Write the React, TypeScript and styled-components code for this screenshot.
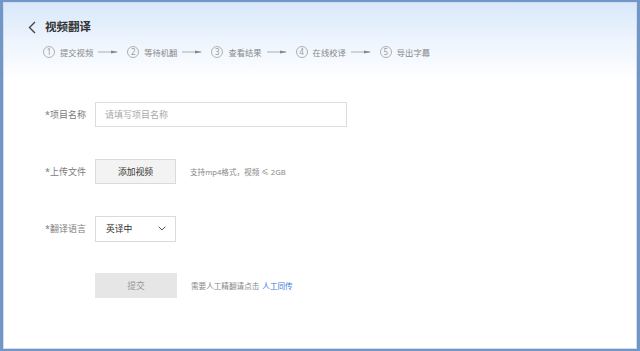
import React from "react";
import styled, { createGlobalStyle } from "styled-components";

const Global = createGlobalStyle`
  html, body { margin: 0; padding: 0; background: #7196c8; }
  body { font-family: "Noto Sans", "Noto Sans CJK SC", sans-serif; }
  * { box-sizing: border-box; }
`;

const Frame = styled.div`
  width: 640px;
  height: 351px;
  padding: 2px 3px 2px 3px;
  background: #7196c8;
`;

const Panel = styled.div`
  height: 100%;
  border: 1px solid #d3dbe6;
  background: linear-gradient(180deg, #d8e8fa 0px, #eef5fd 40px, #ffffff 78px);
  display: flex;
  flex-direction: column;
`;

const Header = styled.div`
  padding: 15px 0 0 24px;
  display: flex;
  flex-direction: column;
`;

const TitleRow = styled.div`
  height: 18px;
  display: flex;
  align-items: center;
  gap: 9px;
`;

const BackIcon = styled.svg`
  width: 8px;
  height: 13px;
  display: block;
`;

const Title = styled.h1`
  margin: 0;
  font-size: 11.5px;
  font-weight: 700;
  color: #333;
  line-height: 18px;
`;

const Steps = styled.div`
  margin: 10px 0 0 15px;
  height: 12px;
  display: flex;
  align-items: center;
`;

const Step = styled.div`
  display: flex;
  align-items: center;
  gap: 5px;
  margin-right: 9px;
`;

const Circle = styled.span`
  width: 12px;
  height: 12px;
  border: 1px solid #b0b0b0;
  border-radius: 50%;
  font-size: 8px;
  color: #999;
  display: flex;
  align-items: center;
  justify-content: center;
  line-height: 1;
`;

const StepText = styled.span`
  font-size: 8.3px;
  color: #888;
  white-space: nowrap;
`;

const Arrow = styled.svg`
  width: 20px;
  height: 6px;
  display: block;
`;

const Form = styled.div`
  margin: 44px 0 0 41px;
  display: flex;
  flex-direction: column;
  gap: 32px;
`;

const Row = styled.div`
  display: flex;
  align-items: center;
  height: 25px;
`;

const Label = styled.label`
  width: 41px;
  margin-right: 9px;
  text-align: right;
  font-size: 9px;
  color: #7a7a7a;
  white-space: nowrap;
`;

const Input = styled.input`
  width: 252px;
  height: 25px;
  border: 1px solid #dcdcdc;
  background: #fff;
  padding: 0 9px;
  font-family: inherit;
  font-size: 9px;
  color: #333;
  outline: none;
  &::placeholder { color: #aaa; }
`;

const GrayButton = styled.button<{ $muted?: boolean }>`
  width: ${(p) => (p.$muted ? 82 : 81)}px;
  height: 25px;
  border: ${(p) => (p.$muted ? "none" : "1px solid #dadada")};
  background: ${(p) => (p.$muted ? "#e6e6e6" : "#f3f3f3")};
  color: ${(p) => (p.$muted ? "#999" : "#333")};
  font-family: inherit;
  font-size: 8.8px;
  padding: 0;
  cursor: pointer;
`;

const Hint = styled.span`
  margin-left: 14px;
  font-size: 7.6px;
  color: #888;
  white-space: nowrap;
`;

const Link = styled.a`
  color: #3a7bd8;
  margin-left: 3px;
  text-decoration: none;
`;

const Select = styled.div`
  width: 81px;
  height: 26px;
  border: 1px solid #dadada;
  background: #fff;
  display: flex;
  align-items: center;
  justify-content: space-between;
  padding: 0 9px 0 10px;
  font-size: 8.8px;
  color: #333;
`;

const Chevron = styled.svg`
  width: 8px;
  height: 5px;
  display: block;
`;

const steps = ["提交视频", "等待机翻", "查看结果", "在线校译", "导出字幕"];

export default function App() {
  return (
    <>
      <Global />
      <Frame>
        <Panel>
          <Header>
            <TitleRow>
              <BackIcon viewBox="0 0 8 13">
                <path d="M7 1 L1.5 6.5 L7 12" fill="none" stroke="#444" strokeWidth="1.4" />
              </BackIcon>
              <Title>视频翻译</Title>
            </TitleRow>
            <Steps>
              {steps.map((s, i) => (
                <Step key={s}>
                  <Circle>{i + 1}</Circle>
                  <StepText>{s}</StepText>
                  {i < steps.length - 1 && (
                    <Arrow viewBox="0 0 20 6">
                      <line x1="0" y1="3" x2="19" y2="3" stroke="#999" strokeWidth="0.8" />
                      <polygon points="13,1.6 20,3 13,4.4" fill="#888" />
                    </Arrow>
                  )}
                </Step>
              ))}
            </Steps>
          </Header>
          <Form>
            <Row>
              <Label>*项目名称</Label>
              <Input placeholder="请填写项目名称" />
            </Row>
            <Row>
              <Label>*上传文件</Label>
              <GrayButton>添加视频</GrayButton>
              <Hint>支持mp4格式，视频 ≤ 2GB</Hint>
            </Row>
            <Row>
              <Label>*翻译语言</Label>
              <Select>
                <span>英译中</span>
                <Chevron viewBox="0 0 8 5">
                  <path d="M0.7 0.7 L4 4 L7.3 0.7" fill="none" stroke="#555" strokeWidth="1" />
                </Chevron>
              </Select>
            </Row>
            <Row>
              <Label />
              <GrayButton $muted>提交</GrayButton>
              <Hint>
                需要人工精翻请点击<Link href="#">人工同传</Link>
              </Hint>
            </Row>
          </Form>
        </Panel>
      </Frame>
    </>
  );
}
